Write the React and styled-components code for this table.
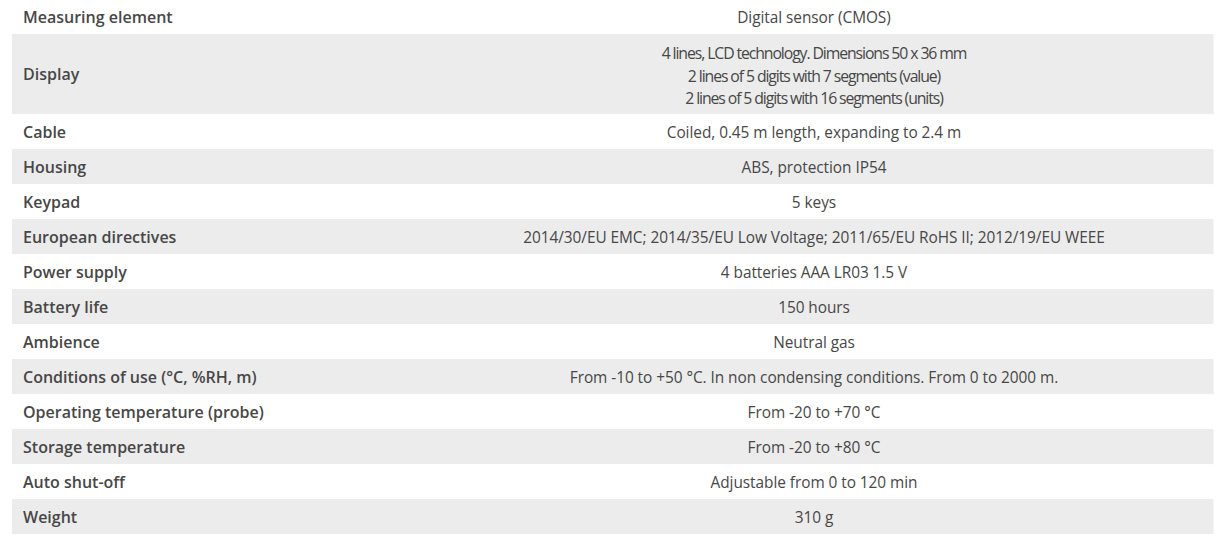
import React from "react";
import styled, { createGlobalStyle } from "styled-components";

const GlobalStyle = createGlobalStyle`
  body {
    margin: 0;
    background: #fff;
    font-family: "Open Sans", "Noto Sans", sans-serif;
  }
`;

const Table = styled.table`
  margin-left: 12px;
  margin-top: -1px;
  width: 1201px;
  border-collapse: collapse;
  color: #474747;
`;

const Row = styled.tr`
  background: ${(p) => (p.$shaded ? "#ececec" : "#fff")};
  box-shadow: ${(p) => (p.$shaded ? "1px 1px 1px rgba(0,0,0,0.04)" : "none")};
`;

const Label = styled.td`
  width: 381px;
  padding: 7px 11px 5px;
  line-height: 23px;
  font-size: 16px;
  font-weight: 600;
  text-align: left;
  vertical-align: middle;
`;

const Value = styled.td`
  padding: ${(p) => (p.$condensed ? "8px 11px 4px" : "7px 11px 5px")};
  font-size: ${(p) => (p.$condensed ? "15.8px" : "15.4px")};
  line-height: ${(p) => (p.$condensed ? "22.5px" : "23px")};
  letter-spacing: ${(p) => (p.$condensed ? "-1.1px" : "-0.05px")};
  text-align: center;
  vertical-align: middle;
`;

const specs = [
  ["Measuring element", "Digital sensor (CMOS)"],
  [
    "Display",
    [
      "4 lines, LCD technology. Dimensions 50 x 36 mm",
      "2 lines of 5 digits with 7 segments (value)",
      "2 lines of 5 digits with 16 segments (units)",
    ],
  ],
  ["Cable", "Coiled, 0.45 m length, expanding to 2.4 m"],
  ["Housing", "ABS, protection IP54"],
  ["Keypad", "5 keys"],
  [
    "European directives",
    "2014/30/EU EMC; 2014/35/EU Low Voltage; 2011/65/EU RoHS II; 2012/19/EU WEEE",
  ],
  ["Power supply", "4 batteries AAA LR03 1.5 V"],
  ["Battery life", "150 hours"],
  ["Ambience", "Neutral gas"],
  [
    "Conditions of use (°C, %RH, m)",
    "From -10 to +50 °C. In non condensing conditions. From 0 to 2000 m.",
  ],
  ["Operating temperature (probe)", "From -20 to +70 °C"],
  ["Storage temperature", "From -20 to +80 °C"],
  ["Auto shut-off", "Adjustable from 0 to 120 min"],
  ["Weight", "310 g"],
];

export default function App() {
  return (
    <>
      <GlobalStyle />
      <Table>
        <tbody>
          {specs.map(([label, value], i) => (
            <Row key={label} $shaded={i % 2 === 1}>
              <Label>{label}</Label>
              {Array.isArray(value) ? (
                <Value $condensed>
                  {value.map((line) => (
                    <div key={line}>{line}</div>
                  ))}
                </Value>
              ) : (
                <Value>{value}</Value>
              )}
            </Row>
          ))}
        </tbody>
      </Table>
    </>
  );
}
